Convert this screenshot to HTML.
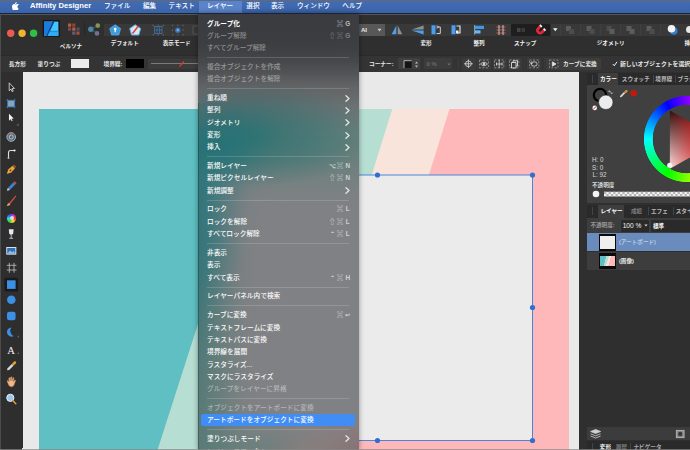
<!DOCTYPE html>
<html lang="ja">
<head>
<meta charset="utf-8">
<title>Affinity Designer</title>
<style>
*{box-sizing:border-box;margin:0;padding:0}
html,body{width:690px;height:450px;overflow:hidden;background:#2e2e2e}
body{position:relative;font-family:"Liberation Sans","Noto Sans CJK JP",sans-serif;font-size:8px;color:#fff;line-height:1}
.abs{position:absolute}
.t{position:absolute;white-space:nowrap;line-height:10px;height:10px}
/* ---------- menubar ---------- */
#menubar{left:0;top:0;width:690px;height:14.300px;background:linear-gradient(#5a6b8c 0,#56698e 1.400px,#406cb5 2.200px,#3b63a8 12.800px,#19233c 13.200px,#19233c 14.300px)}
#menubar .t{top:1.400px;font-size:6.600px;font-weight:500;color:#fff}
#mb-active{left:198.500px;top:1px;width:43.500px;height:12px;background:#5b83ca}
/* ---------- toolbar ---------- */
#toolbar{left:0;top:13px;width:690px;height:43px;background:linear-gradient(#565656 1.300px,#565656 2px,#2f2f2f 2.300px)}
#toolbar .lbl{font-size:5.600px;font-weight:700;color:#f0f0f0;top:25px}
#toolbar .band{position:absolute;top:11px;height:12px;background:#393939}
#toolbar svg,#ctx svg,#tools svg,#right svg{position:absolute;overflow:visible}
#ctx{left:0;top:55px;width:690px;height:17px;background:linear-gradient(#2a2a2a 0,#2a2a2a .6px,#343434 1px)}
#ctx .t{font-size:5.700px;font-weight:700;color:#e6e6e6;top:3.500px}
#ctx .box{position:absolute;top:3px;height:11px;background:#404040;border-radius:1px}
/* ---------- canvas ---------- */
#tools{left:0;top:72px;width:22.700px;height:376px;background:#2e2e2e}
#canvas{left:22px;top:71.600px;width:557px;height:378.400px;background:#e9e9e9;overflow:hidden}
/* ---------- right panel ---------- */
#right{left:579px;top:72px;width:111px;height:378px;background:#2f2f2f}
#right .pt{font-size:5.600px;font-weight:700;color:#b8b8b8}
#right .pt.on{color:#fff}
#right .pt.dim{color:#7c7c7c}
/* ---------- dropdown ---------- */
#menu{left:198px;top:13px;width:161px;height:437px;overflow:hidden;background:#666;box-shadow:0 0 5px rgba(0,0,0,.4)}
#menu .bd{position:absolute;left:-98px;top:-63px;width:360px;height:600px;filter:blur(17px) saturate(2)}
#menu .ov{position:absolute;left:0;top:0;width:161px;height:437px;background:radial-gradient(ellipse 105px 52px at 64px 122px,rgba(16,105,106,.5),rgba(16,105,106,.3) 50%,rgba(16,105,106,0) 100%),linear-gradient(to bottom,rgba(40,40,40,0) 28px,rgba(40,40,40,.2) 60px,rgba(40,40,40,.2) 85px,rgba(40,40,40,0) 120px),rgba(67,69,73,.64)}
#menu .ov2{position:absolute;left:0;top:90px;width:50px;height:347px;background:linear-gradient(to right,rgba(25,95,95,.14),rgba(25,95,95,0));box-shadow:inset 1px 0 0 rgba(0,0,0,.22)}
#menu .t{left:9px;font-size:6.700px;font-weight:500;color:#fbfbfb}
#menu .d{color:rgba(255,255,255,.42)}
#menu .k{left:auto;right:7.300px;color:rgba(255,255,255,.66);font-weight:700;font-size:6.400px}
#menu .k span{display:inline-block;width:7.800px;text-align:center}
#menu .k.d{color:rgba(255,255,255,.36)}
#menu .sep{position:absolute;left:9px;width:142px;height:1px;background:rgba(255,255,255,.16)}
#menu .hl{position:absolute;left:3px;width:154px;height:12px;background:#3f8df5;border-radius:2px}
#menu .ar{position:absolute;left:147px;width:5px;height:7px}
</style>
</head>
<body>

<!-- ======= canvas ======= -->
<div id="canvas" class="abs">
<svg class="abs" style="left:0;top:.4px" width="557" height="378" viewBox="22 72 557 378">
  <rect x="39" y="109" width="530" height="341" fill="#5fbfc2"/>
  <polygon points="267,109 569,109 569,450 157.500,450" fill="#b7ded3"/>
  <polygon points="392.300,109 569,109 569,450 286,450" fill="#f9e4dc"/>
  <polygon points="449.500,109 569,109 569,450 343,450" fill="#feb8b9"/>
  <rect x="222" y="175" width="310.500" height="265.500" fill="#ebebeb"/>
  <rect x="222.500" y="175" width="310" height="265.500" fill="none" stroke="#4a86d8" stroke-width="1"/>
  <g fill="#2f6fd0">
    <circle cx="377.500" cy="175" r="2.600"/><circle cx="532.500" cy="175" r="2.600"/>
    <circle cx="532.500" cy="307.500" r="2.600"/><circle cx="222.500" cy="307.500" r="2.600"/>
    <circle cx="377.500" cy="440.500" r="2.600"/><circle cx="532.500" cy="440.500" r="2.600"/>
    <circle cx="222.500" cy="175" r="2.600"/><circle cx="222.500" cy="440.500" r="2.600"/>
  </g>
</svg>
</div>

<!-- ======= left tools ======= -->
<div id="tools" class="abs">
  <div class="abs" style="left:0;top:0;width:1px;height:378px;background:#4c4c4c"></div>
  <svg style="left:0;top:0" width="22" height="378" viewBox="0 72 22 378">
    <!-- move tool -->
    <g transform="translate(11.800 87.200) scale(.84) translate(-11.600 -87.700)"><path d="M8.500 82.500 V92 L10.600 89.900 L12 93 L13.300 92.400 L11.900 89.400 L14.800 89.200 Z" fill="#2a2a2a" stroke="#dcdcdc" stroke-width="1" stroke-linejoin="round"/></g>
    <!-- artboard tool -->
    <rect x="7.600" y="100.300" width="7" height="6.600" fill="#8aa4b6"/>
    <path d="M6.300 100.300 H15.500 M6.300 106.900 H15.500 M7.600 98.800 V108.300 M14.600 98.800 V108.300" stroke="#2f7fc8" stroke-width=".8"/>
    <!-- node tool -->
    <g transform="translate(11.200 117.500) scale(.8) translate(-11.600 -120.800)"><path d="M8.800 116 V125 L10.900 123 L12.300 125.600 L13.400 125 L12.100 122.400 L14.800 122 Z" fill="#f2f2f2"/></g>
    <path d="M16.500 125.500 l2 0 l0 -2 Z" fill="#7a7a7a"/>
    <!-- contour/spiral tool -->
    <circle cx="11.200" cy="137" r="4.300" fill="#5a6a7a" stroke="#a8b4c0" stroke-width="1"/>
    <circle cx="11.200" cy="137" r="2" fill="none" stroke="#c8d0d8" stroke-width=".8"/>
    <path d="M8 134.500 A4.300 4.300 0 0 1 14.800 134.800" fill="none" stroke="#b86a6a" stroke-width=".9"/>
    <!-- corner tool -->
    <path d="M8.500 158 V152.500 Q8.500 150.500 10.500 150.500 H14.500" fill="none" stroke="#e0e0e0" stroke-width="1.100"/>
    <circle cx="14.500" cy="150.500" r="1.100" fill="#f0f0f0"/><circle cx="8.500" cy="158" r="1" fill="#bdbdbd"/>
    <!-- pen -->
    <path d="M6.800 174 L8.200 169.500 L12.500 165.800 L15 168.300 L11.300 172.600 Z" fill="#e8a23a"/>
    <path d="M12.500 165.800 L14 164.500 L16.300 166.800 L15 168.300 Z" fill="#8a5a2a"/>
    <circle cx="10.500" cy="170.300" r=".9" fill="#5a3a1a"/>
    <!-- pencil -->
    <path d="M7 190.800 L7.800 188 L13.500 182.300 L15.500 184.300 L9.800 190 Z" fill="#3f7fd0"/>
    <path d="M13.500 182.300 L14.600 181.200 L16.600 183.200 L15.500 184.300 Z" fill="#d84a3a"/>
    <path d="M7 190.800 L7.800 188 L9.800 190 Z" fill="#e8c8a0"/>
    <!-- brush -->
    <g transform="translate(0 -2.5)">
    <path d="M9 205.500 L15.500 198 L16.400 198.800 L10.300 206.600 Z" fill="#c8503a"/>
    <path d="M6.800 208.500 Q7.500 205.500 9 205.500 L10.300 206.600 Q10 208.500 6.800 208.500 Z" fill="#e8a060"/>
    </g>
    </svg>
  <!-- fill tool (colour wheel) -->
  <div class="abs" style="left:7px;top:141.800px;width:9px;height:9px;border-radius:50%;background:conic-gradient(from 90deg,#f33,#fd3,#3d3,#3dd,#35f,#d3d,#f33)"></div>
  <div class="abs" style="left:9.500px;top:144.300px;width:4px;height:4px;border-radius:50%;background:#ddd"></div>
  <svg style="left:0;top:0" width="22" height="378" viewBox="0 72 22 378">
    <!-- transparency tool (glass) -->
    <g transform="translate(0 -2.3)">
    <path d="M8.800 231.500 H13.600 L13.200 236 Q11.200 238 9.200 236 Z" fill="#e8e8f0"/>
    <path d="M11.200 237 V240.300 M9.300 240.600 H13.100" stroke="#c8c8d0" stroke-width=".9"/>
    </g>
    <!-- place image -->
    <g transform="translate(0 -1.3)">
    <rect x="6.300" y="248.300" width="10" height="7.600" fill="#e8eef4"/>
    <rect x="7.200" y="249.200" width="8.200" height="5.800" fill="#2f6fb8"/>
    <path d="M7.200 255 L10 251.800 L12 253.500 L13.500 252.300 L15.400 255 Z" fill="#8fc0e8"/>
    </g>
    <!-- crop -->
    <g transform="translate(0 -1.5)">
    <path d="M9.300 264.300 V274.200 M14 264.300 V274.200 M6.800 266.800 H16.500 M6.800 271.500 H16.500" fill="none" stroke="#b4b4b4" stroke-width=".9"/>
    </g>
    <!-- rect (selected) -->
    <rect x="4.500" y="277.800" width="13.600" height="13.600" rx="1.500" fill="#1a1a1a"/>
    <rect x="7" y="280.300" width="8.600" height="8.600" fill="#3b8fe4"/>
    <!-- ellipse -->
    <g transform="translate(0 -0.7)">
    <circle cx="11.300" cy="300.500" r="4.300" fill="#3b8fe4"/>
    </g>
    <!-- rounded rect -->
    <g transform="translate(0 -1)">
    <rect x="7" y="312.800" width="8.600" height="8.400" rx="2.200" fill="#3b8fe4"/>
    </g>
    <!-- crescent -->
    <g transform="translate(0 -0.6)">
    <path d="M11.500 328 A4.600 4.600 0 1 0 13.800 336.600 A5.500 5.500 0 0 1 11.500 328 Z" fill="#3b8fe4"/>
    <path d="M17 337.800 l2 0 l0 -2 Z" fill="#6a6a6a"/>
    <path d="M17 354.500 l2 0 l0 -2 Z" fill="#6a6a6a"/>
    </g>
    <!-- pipette -->
    <g transform="translate(0 -1.2)">
    <path d="M7 371.500 L7.600 369.500 L11.800 365.300 L13.400 366.900 L9.200 371.100 Z" fill="#d8d8d8"/>
    <path d="M11.800 365.300 L14 362.800 Q15.500 362 16 363 Q16.600 364 15.600 365 L13.400 366.900 Z" fill="#e0a030"/>
    </g>
    <!-- hand -->
    <g transform="translate(0 2.5)">
    <path d="M8 381 L7 378.500 Q7.400 377.500 8.400 378.300 L9 379.500 L8.800 375.500 Q9.400 374.700 10 375.500 L10.300 378.500 L10.600 374.600 Q11.300 373.800 11.900 374.600 L11.900 378.500 L12.800 375.300 Q13.500 374.700 14 375.500 L13.500 379.300 L14.800 377.500 Q15.700 377.300 15.600 378.300 L14 382.500 Q13.500 384.300 11.500 384.300 Q9 384.300 8 381 Z" fill="#f0b88a" stroke="#b87848" stroke-width=".5"/>
    </g>
    <!-- zoom -->
    <g transform="translate(0 1.5)">
    <circle cx="10.300" cy="396.300" r="3.600" fill="#9cc8ee" stroke="#e8f0f8" stroke-width="1"/>
    <path d="M13 399.200 L15.800 402.200" stroke="#d89a3a" stroke-width="1.600" stroke-linecap="round"/>
    </g>
    </svg>
  <div class="t" style="left:7.200px;top:272.500px;font-family:'Liberation Serif',serif;font-size:10.500px;font-weight:400;line-height:11px;height:11px;color:#f2f2f2">A</div>
</div>


<!-- ======= right panel ======= -->
<div id="right" class="abs">
  <!-- coordinates inside: subtract (579,72) -->
  <!-- colour panel tabs -->
  <div class="abs" style="left:8px;top:1px;width:103px;height:11.500px;background:#2a2a2a"></div>
  <div class="abs" style="left:19.300px;top:1px;width:20px;height:12px;background:#3e3e3e"></div>
  <div class="abs" style="left:13px;top:3px;width:1px;height:8px;background:#444"></div>
  <div class="t pt on" style="left:21px;top:2.200px">カラー</div>
  <div class="t pt" style="left:42.800px;top:2.200px">スウォッチ</div>
  <div class="t pt" style="left:76.300px;top:2.200px">境界線</div>
  <div class="t pt" style="left:98.600px;top:2.200px">ブラシ</div>
  <div class="abs" style="left:73.600px;top:3px;width:1px;height:8px;background:#444"></div>
  <div class="abs" style="left:95.900px;top:3px;width:1px;height:8px;background:#444"></div>
  <!-- colour panel body -->
  <div class="abs" style="left:7.500px;top:12.500px;width:103.500px;height:118.500px;background:#404040"></div>
  <!-- hue ring -->
  <div class="abs" style="left:63.900px;top:23.200px;width:88px;height:88px;border-radius:50%;background:conic-gradient(from 90deg,#f00,#ff0,#0f0,#0ff,#00f,#f0f,#f00);-webkit-mask:radial-gradient(circle closest-side,transparent 33.900px,#000 34.600px,#000 42.700px,transparent 43.400px);mask:radial-gradient(circle closest-side,transparent 33.900px,#000 34.600px,#000 42.700px,transparent 43.400px)"></div>
  <svg style="left:0;top:0" width="111" height="378" viewBox="579 72 111 378">
    <defs>
      <linearGradient id="tg1" x1="661" y1="139.500" x2="712" y2="139.500" gradientUnits="userSpaceOnUse"><stop offset="0" stop-color="#e01010" stop-opacity="0"/><stop offset="1" stop-color="#e01010" stop-opacity="1"/></linearGradient>
      <linearGradient id="tg2" x1="670" y1="108" x2="670" y2="166" gradientUnits="userSpaceOnUse"><stop offset="0" stop-color="#000"/><stop offset="1" stop-color="#fff"/></linearGradient>
    </defs>
    <polygon points="669.900,110.600 720.400,139.700 669.900,168.800" fill="url(#tg2)"/>
    <polygon points="669.900,110.600 720.400,139.700 669.900,168.800" fill="url(#tg1)"/>
    <circle cx="669.600" cy="165.400" r="2.300" fill="#f4f4f4" stroke="#fff" stroke-width=".5"/>
    <!-- stroke / fill selectors -->
    <circle cx="600" cy="95.100" r="6.200" fill="none" stroke="#000" stroke-width="2.200"/>
    <circle cx="605.800" cy="102.300" r="7.200" fill="#ececec" stroke="#2a2a2a" stroke-width=".6"/>
    <path d="M608.500 91.300 q2.800 -.6 3.300 2.600 M611.800 93.900 l-1.300 -1 M611.800 93.900 l1 -1.300 M608.500 91.300 l1.200 -1.200 M608.500 91.300 l1.300 1" fill="none" stroke="#b8b8b8" stroke-width=".7"/>
    <circle cx="594.700" cy="107.900" r="2.300" fill="#f4f4f4"/>
    <path d="M593.200 109.400 L596.200 106.400" stroke="#d83030" stroke-width="1"/>
    <!-- pipette -->
    <path d="M619.800 97.300 L620.300 95.800 L624 92.100 L625.200 93.300 L621.500 97 Z" fill="#d8d8d8"/>
    <path d="M624 92.100 L625.500 90.300 Q626.800 89.700 627.400 90.600 Q627.900 91.500 627 92.300 L625.200 93.300 Z" fill="#d89a30"/>
    <circle cx="633.700" cy="93.300" r="3.200" fill="#c4180f"/>
    <!-- opacity slider -->
    <rect x="604" y="191.800" width="86" height="4.600" fill="#f2f2f2"/>
    <g fill="#b4b4b4">
      <path d="M604 191.800h2.300v2.300h-2.300z M608.600 191.800h2.300v2.300h-2.300z M613.200 191.800h2.300v2.300h-2.300z M617.800 191.800h2.300v2.300h-2.300z M622.400 191.800h2.300v2.300h-2.300z M627 191.800h2.300v2.300h-2.300z M631.600 191.800h2.300v2.300h-2.300z M636.200 191.800h2.300v2.300h-2.300z M640.800 191.800h2.300v2.300h-2.300z M645.400 191.800h2.300v2.300h-2.300z M650 191.800h2.300v2.300h-2.300z M654.600 191.800h2.300v2.300h-2.300z M659.200 191.800h2.300v2.300h-2.300z M663.800 191.800h2.300v2.300h-2.300z M668.400 191.800h2.300v2.300h-2.300z M673 191.800h2.300v2.300h-2.300z M677.600 191.800h2.300v2.300h-2.300z M682.200 191.800h2.300v2.300h-2.300z M686.800 191.800h2.300v2.300h-2.300z"/>
      <path d="M606.300 194.100h2.300v2.300h-2.300z M610.900 194.100h2.300v2.300h-2.300z M615.500 194.100h2.300v2.300h-2.300z M620.100 194.100h2.300v2.300h-2.300z M624.700 194.100h2.300v2.300h-2.300z M629.300 194.100h2.300v2.300h-2.300z M633.900 194.100h2.300v2.300h-2.300z M638.500 194.100h2.300v2.300h-2.300z M643.100 194.100h2.300v2.300h-2.300z M647.700 194.100h2.300v2.300h-2.300z M652.300 194.100h2.300v2.300h-2.300z M656.900 194.100h2.300v2.300h-2.300z M661.500 194.100h2.300v2.300h-2.300z M666.100 194.100h2.300v2.300h-2.300z M670.700 194.100h2.300v2.300h-2.300z M675.300 194.100h2.300v2.300h-2.300z M679.900 194.100h2.300v2.300h-2.300z M684.500 194.100h2.300v2.300h-2.300z M689.100 194.100h.9v2.300h-.9z"/>
    </g>
    <circle cx="596" cy="194" r="3.300" fill="#f4f4f4"/>
  </svg>
  <div class="t" style="left:13px;top:83px;font-size:6.300px;color:#d6d6d6">H: 0</div>
  <div class="t" style="left:13px;top:90.500px;font-size:6.300px;color:#d6d6d6">S: 0</div>
  <div class="t" style="left:13.500px;top:97.700px;font-size:6.300px;color:#d6d6d6">L: 92</div>
  <div class="t" style="left:13px;top:107.700px;font-size:5.600px;font-weight:700;color:#d8d8d8">不透明度</div>

  <!-- layers panel tabs -->
  <div class="abs" style="left:8px;top:133px;width:103px;height:12.500px;background:#2a2a2a"></div>
  <div class="abs" style="left:19.300px;top:133px;width:25.600px;height:13px;background:#3e3e3e"></div>
  <div class="abs" style="left:13px;top:135px;width:1px;height:8px;background:#444"></div>
  <div class="t pt on" style="left:21.400px;top:134px">レイヤー</div>
  <div class="t pt dim" style="left:52px;top:134px">成絵</div>
  <div class="t pt" style="left:72px;top:134px">エフェ</div>
  <div class="t pt" style="left:96.700px;top:134px">スタイル</div>
  <div class="abs" style="left:68.800px;top:135px;width:1px;height:8px;background:#444"></div>
  <div class="abs" style="left:93.500px;top:135px;width:1px;height:8px;background:#444"></div>
  <!-- opacity row -->
  <div class="abs" style="left:8px;top:146px;width:103px;height:15px;background:#3d3d3d"></div>
  <div class="t pt dim" style="left:11.400px;top:148px;color:#9a9a9a">不透明度:</div>
  <div class="abs" style="left:42px;top:147.500px;width:27.600px;height:12px;background:#2a2a2a;border-radius:1px"></div>
  <div class="t" style="left:43.700px;top:148.500px;font-size:6.600px;color:#f4f4f4">100 %</div>
  <svg style="left:64.500px;top:152px" width="4" height="3" viewBox="0 0 4 3"><path d="M.3 .4 H3.700 L2 2.600 Z" fill="#d0d0d0"/></svg>
  <div class="abs" style="left:72px;top:147.500px;width:39px;height:12px;background:#2a2a2a;border-radius:1px 0 0 1px"></div>
  <div class="t pt on" style="left:74px;top:148.500px">標準</div>
  <!-- layer rows -->
  <div class="abs" style="left:8.200px;top:161.200px;width:103px;height:18.300px;background:#6a8cbd"></div>
  <div class="abs" style="left:20px;top:162px;width:17px;height:16.700px;background:#0a0a0a"></div>
  <div class="abs" style="left:20.800px;top:164px;width:15.400px;height:12.800px;background:#efefef"></div>
  <div class="t pt" style="left:40px;top:165.200px;color:#b4cbea">(アートボード)</div>
  <div class="abs" style="left:8.200px;top:179.500px;width:103px;height:18.400px;background:#3d3d3d"></div>
  <div class="abs" style="left:20px;top:181.400px;width:17px;height:16px;background:#0a0a0a"></div>
  <div class="abs" style="left:20.800px;top:183.500px;width:15.400px;height:10.400px;background:linear-gradient(107deg,#5fbfc2 0,#5fbfc2 36%,#b7ded3 36%,#b7ded3 50%,#f9e4dc 50%,#f9e4dc 62%,#feb8b9 62%)"></div>
  <div class="t pt" style="left:40px;top:183.500px;color:#e8e8e8">(画像)</div>
  <!-- bottom bar -->
  <div class="abs" style="left:7.700px;top:355.300px;width:104px;height:13px;background:#3c3c3c"></div>
  <svg style="left:0;top:0" width="111" height="378" viewBox="579 72 111 378">
    <g fill="none" stroke="#d0d0d0" stroke-width=".8" stroke-linejoin="round">
      <path d="M590.600 431.500 L595.600 429.500 L600.600 431.500 L595.600 433.500 Z" fill="#d0d0d0"/>
      <path d="M590.600 433.800 L595.600 435.800 L600.600 433.800 M590.600 436 L595.600 438 L600.600 436"/>
    </g>
    <rect x="676.300" y="430.300" width="7.800" height="7.400" fill="#8a8a8a"/>
    <rect x="676.300" y="430.300" width="7.800" height="7.400" fill="none" stroke="#bdbdbd" stroke-width=".8"/>
    <circle cx="680.200" cy="434" r="2.200" fill="#3a3a3a"/>
  </svg>
  <!-- bottom tabs -->
  <div class="abs" style="left:7.700px;top:369px;width:104px;height:9px;background:#2a2a2a"></div>
  <div class="abs" style="left:13px;top:370.500px;width:1px;height:8px;background:#444"></div>
  <div class="t pt on" style="left:20.800px;top:370px">変形</div>
  <div class="t pt dim" style="left:37px;top:370px">履歴</div>
  <div class="t pt" style="left:54.500px;top:370px;color:#a8a8a8">ナビゲータ</div>
  <div class="abs" style="left:50.500px;top:371px;width:1px;height:7px;background:#444"></div>
</div>


<!-- ======= toolbar ======= -->
<div id="toolbar" class="abs">
  <div class="abs" style="left:0;top:0;width:1px;height:60px;background:#4c4c4c"></div>
  <!-- traffic lights -->
  <svg style="left:0;top:0" width="60" height="43" viewBox="0 13 60 43">
    <circle cx="10.700" cy="33.200" r="3.700" fill="#ee5a52"/>
    <circle cx="22.100" cy="33.200" r="3.700" fill="#efb32e"/>
    <circle cx="33.600" cy="33.200" r="3.700" fill="#2fbe46"/>
  </svg>
  <!-- personas -->
  <svg style="left:42px;top:7px" width="62" height="18" viewBox="42 20 62 18">
    <rect x="42.600" y="20" width="17.400" height="16.800" rx="1" fill="#161616"/>
    <rect x="44" y="21.600" width="14.400" height="14.200" fill="#44c4ff"/>
    <polygon points="44,21.600 52.700,21.600 46.100,35.800 44,35.800" fill="#1a7cdc"/>
    <polygon points="46.100,35.800 52.700,21.600 54.500,21.600 47.900,35.800" fill="#0b3c8a"/>
    <polygon points="49.800,30.800 58.400,30.800 58.400,32.400 49,32.400" fill="#1c8ee4"/>
    <polygon points="49,32.400 58.400,32.400 58.400,35.800 47.900,35.800" fill="#2eacf6"/>
    <g>
      <rect x="68" y="23.500" width="3.200" height="3.200" fill="#c0563a"/><rect x="72.200" y="23.500" width="3.200" height="3.200" fill="#8a4a3a"/>
      <rect x="68" y="27.500" width="3.200" height="3.200" fill="#7a4a5a"/><rect x="72.200" y="27.500" width="3.200" height="3.200" fill="#b0603a"/><rect x="76.400" y="27.500" width="3.200" height="3.200" fill="#5a4a6a"/>
      <rect x="72.200" y="31.500" width="3.200" height="3.200" fill="#6a5a7a"/><rect x="76.400" y="31.500" width="3.200" height="3.200" fill="#a0523a"/>
    </g>
    <g>
      <path d="M90.800 29.300 L97.800 25.600 M90.800 29.300 L97 33.400" stroke="#3a5466" stroke-width="1.300" fill="none"/>
      <path d="M84.700 22 V36" stroke="#262626" stroke-width=".8"/>
      <circle cx="90.800" cy="29.300" r="2.700" fill="#4a88a6"/>
      <circle cx="97.800" cy="25.600" r="2.300" fill="#86965a"/>
      <circle cx="97" cy="33.400" r="2.300" fill="#74708e"/>
    </g>
  </svg>
  <div class="t lbl" style="left:59.800px;top:28px">ペルソナ</div>
  <!-- band 1 -->
  <div class="band" style="left:104px;width:96px"></div>
  <svg style="left:108px;top:11px" width="92" height="12" viewBox="108 24 92 12">
    <!-- default icon -->
    <path d="M115.200 24.800 L120.700 28.600 L118.800 35 L111.600 35 L109.700 28.600 Z" fill="#3d9be0" stroke="#6ab8f0" stroke-width=".6" stroke-linejoin="round"/>
    <circle cx="115.200" cy="29" r="1.300" fill="#fff"/><rect x="114.600" y="29" width="1.200" height="3.200" fill="#fff"/>
    <!-- reset icon -->
    <path d="M135.200 24.800 L140.700 28.600 L138.800 35 L131.600 35 L129.700 28.600 Z" fill="#d8e6f2" stroke="#5aa8e8" stroke-width="1" stroke-linejoin="round"/>
    <path d="M132.500 33.500 L138 26.500" stroke="#e0453a" stroke-width="1.600"/>
    <!-- grid icon -->
    <g stroke="#3f74a8" stroke-width=".8" fill="none">
      <rect x="154.500" y="26.500" width="7.500" height="7"/>
      <path d="M157 26.500 V33.500 M159.500 26.500 V33.500 M154.500 30 H162"/>
    </g>
    <g fill="#5a6a7a"><rect x="152.500" y="24.800" width="1.200" height="1.200"/><rect x="162.800" y="24.800" width="1.200" height="1.200"/><rect x="152.500" y="34.200" width="1.200" height="1.200"/><rect x="162.800" y="34.200" width="1.200" height="1.200"/><rect x="157.700" y="24.800" width="1.200" height="1.200"/><rect x="157.700" y="34.200" width="1.200" height="1.200"/></g>
    <!-- snap-ish icon -->
    <g fill="#5a6a7a"><rect x="172" y="24.800" width="1.200" height="1.200"/><rect x="182.500" y="24.800" width="1.200" height="1.200"/><rect x="172" y="34.200" width="1.200" height="1.200"/><rect x="182.500" y="34.200" width="1.200" height="1.200"/><rect x="177.200" y="24.800" width="1.200" height="1.200"/><rect x="177.200" y="34.200" width="1.200" height="1.200"/><rect x="172" y="29.500" width="1.200" height="1.200"/><rect x="182.500" y="29.500" width="1.200" height="1.200"/></g>
    <circle cx="177.800" cy="30.200" r="2.600" fill="#3f78b8"/><circle cx="177.800" cy="30.200" r="1.100" fill="#7ab4ec"/>
    <g stroke="#5a5a5a" stroke-width=".8" fill="none"><rect x="193" y="26" width="6" height="8"/></g>
  </svg>
  <div class="t lbl" style="left:110.800px">デフォルト</div>
  <div class="t lbl" style="left:162.700px">表示モード</div>

  <!-- right part -->
  <div class="band" style="left:359px;width:331px"></div>
  <div class="abs" style="left:359px;top:11px;width:26px;height:12px;background:#585858;border-radius:0 1px 1px 0"></div>
  <div class="t" style="left:361px;top:12px;font-size:6px;font-weight:700;color:#f0f0f0">AI</div>
  <svg style="left:377px;top:15px" width="5" height="4" viewBox="0 0 5 4"><path d="M.5 .8 H4.500 L2.500 3.400 Z" fill="#cfcfcf"/></svg>
  <svg style="left:388px;top:11px" width="302" height="12" viewBox="388 24 302 12">
    <!-- flip h -->
    <polygon points="396.300,25.500 396.300,34.300 391.700,34.300" fill="#4aa0ee"/>
    <polygon points="397.700,25.500 397.700,34.300 402.300,34.300" fill="#8f8f8f"/>
    <!-- flip v -->
    <polygon points="423.600,29.400 423.600,25.600 411.600,29.400" fill="#8f8f8f"/>
    <polygon points="423.600,30.600 423.600,34.400 411.600,30.600" fill="#4aa0ee"/>
    <!-- rotate ccw -->
    <rect x="431.500" y="25.300" width="4" height="9" fill="#4aa0ee"/>
    <path d="M436.500 27 H440.300 V33.500 H436.500" fill="none" stroke="#d0d0d0" stroke-width="1"/>
    <path d="M437 28.500 l1.500 -1.500 l-1.500 -1.500" fill="none" stroke="#e8e8e8" stroke-width=".8"/>
    <!-- rotate cw -->
    <rect x="451.500" y="25.300" width="4" height="9" fill="#4aa0ee"/>
    <path d="M456.500 26 H460 V33 H457" fill="none" stroke="#e0e0e0" stroke-width="1.200"/>
    <rect x="456" y="30.500" width="2.500" height="3" fill="#f0f0f0"/>
    <!-- align -->
    <rect x="475" y="25.800" width="9" height="3.200" fill="#3f97ea"/>
    <rect x="475" y="30.300" width="5.500" height="3.200" fill="#6db6f5"/>
    <rect x="474.300" y="25" width=".8" height="9.500" fill="#9ec8ee"/>
    <!-- distribute -->
    <g stroke="#d85a4a" stroke-width=".9"><path d="M496.500 27 H505.500 M496.500 30 H505.500 M496.500 33 H505.500"/></g>
    <g stroke="#cfcfcf" stroke-width=".9"><path d="M499 25 V35 M503 25 V35"/></g>
    <!-- snapping -->
    <rect x="511" y="24" width="39.500" height="12" rx="1" fill="#1e1e1e"/>
    <rect x="517" y="28" width="3.500" height="4" fill="#444"/><rect x="521.500" y="28" width="3.500" height="4" fill="#3a3a3a"/>
    <g transform="rotate(45 540.500 30)">
      <path d="M536.500 27 V30.500 a4 4 0 0 0 8 0 V27 h-2.700 V30.500 a1.300 1.300 0 0 1 -2.600 0 V27 Z" fill="#e0283c"/>
      <rect x="536.500" y="26" width="2.700" height="1.800" fill="#f2f2f2"/><rect x="541.800" y="26" width="2.700" height="1.800" fill="#f2f2f2"/>
    </g>
    <path d="M553 28.300 H557.600 L555.300 31.300 Z" fill="#f2f2f2"/>
    <!-- geometry (disabled) -->
    <g fill="#5c5c5c">
      <rect x="566" y="26" width="5" height="5"/><rect x="569" y="29" width="5" height="5" fill="#4c4c4c"/>
      <rect x="586.500" y="26" width="5" height="5"/><rect x="589.500" y="29" width="5" height="5" fill="#4c4c4c"/>
      <rect x="606.500" y="26" width="5" height="5" fill="#4c4c4c"/><rect x="609.500" y="29" width="5" height="5"/>
      <rect x="626.500" y="26" width="5" height="5"/><rect x="629.500" y="29" width="5" height="5"/>
      <rect x="646.500" y="26" width="5" height="5"/><rect x="649.500" y="29" width="5" height="5" fill="#4c4c4c"/>
    </g>
    <g stroke="#444" stroke-width=".6"><path d="M560.500 24 V36 M580.500 24 V36 M600.500 24 V36 M620.500 24 V36 M640.500 24 V36 M660.500 24 V36"/></g>
    <!-- insert -->
    <circle cx="673.800" cy="31" r="3.800" fill="#2f7fd0"/>
    <circle cx="671.500" cy="28.800" r="3.800" fill="#f4f4f4"/>
    <circle cx="689.500" cy="29.500" r="3.500" fill="#e8e8e8"/>
  </svg>
  <div class="t lbl" style="left:420.400px">変形</div>
  <div class="t lbl" style="left:473.500px">整列</div>
  <div class="t lbl" style="left:514px">スナップ</div>
  <div class="t lbl" style="left:596.700px">ジオメトリ</div>
  <div class="t lbl" style="left:684.500px">挿入</div>
</div>

<div id="ctx" class="abs">
  <div class="abs" style="left:0;top:0;width:1px;height:18px;background:#4c4c4c"></div>
  <div class="t" style="left:8.800px">長方形</div>
  <div class="t" style="left:37.500px">塗りつぶ</div>
  <div class="abs" style="left:71px;top:3.700px;width:18px;height:9.200px;background:#ebebeb"></div>
  <div class="t" style="left:103.500px">境界線:</div>
  <div class="abs" style="left:125.500px;top:3.700px;width:18.700px;height:9.400px;background:#000"></div>
  <div class="box" style="left:148px;width:52px;top:3.500px;height:10px;background:#3c3c3c"></div>
  <div class="abs" style="left:150.700px;top:8px;width:50px;height:1px;background:#7a7a7a"></div>
  <svg style="left:178px;top:5px" width="8" height="8" viewBox="0 0 8 8"><path d="M1.500 6.500 L6 1.500" stroke="#d83a30" stroke-width="1.200"/></svg>

  <div class="t" style="left:369px">コーナー:</div>
  <div class="box" style="left:398px;width:22.400px"></div>
  <svg style="left:403px;top:4.500px" width="16" height="9" viewBox="403 59.500 16 9">
    <rect x="403.800" y="60" width="7.800" height="7.600" fill="#151515"/>
    <path d="M404 67.600 V60.200 H411.600" fill="none" stroke="#d8d8d8" stroke-width=".8"/>
    <path d="M415 63 l1.500 -2 l1.500 2 Z M415 65 l1.500 2 l1.500 -2 Z" fill="#bdbdbd"/>
  </svg>
  <div class="box" style="left:424px;width:28.400px;background:#3c3c3c"></div>
  <div class="t" style="left:426.500px;color:#6a6a6a;font-size:6px;top:3.500px">0 %</div>
  <svg style="left:446.500px;top:7.500px" width="4" height="3" viewBox="0 0 4 3"><path d="M.3 .5 H3.700 L2 2.600 Z" fill="#707070"/></svg>
  <div class="abs" style="left:458px;top:3px;width:1px;height:11px;background:#3c3c3c"></div>
  <div class="box" style="left:461.5px;width:14px;top:2.500px;height:12px;background:#3b3b3b"></div>
  <div class="box" style="left:477px;width:14px;top:2.500px;height:12px;background:#3b3b3b"></div>
  <div class="box" style="left:492.5px;width:14px;top:2.500px;height:12px;background:#3b3b3b"></div>
  <div class="box" style="left:508px;width:14px;top:2.500px;height:12px;background:#3b3b3b"></div>
  <div class="box" style="left:527px;width:14px;top:2.500px;height:12px;background:#3b3b3b"></div>
  <div class="box" style="left:546px;width:55px;top:2.500px;height:12px;background:#3d3d3d"></div>
  <svg style="left:460px;top:3px" width="102" height="12" viewBox="460 58 102 12">
    <g fill="none" stroke="#dcdcdc" stroke-width=".8">
      <!-- crosshair -->
      <circle cx="468.400" cy="63.800" r="2.900"/><path d="M468.400 59.500 V68 M464 63.800 H472.800"/>
      <!-- eye -->
      <rect x="479.500" y="60" width="9" height="7.800" stroke-dasharray="2 1.500" stroke="#9a9a9a"/>
      <path d="M480.500 64 q3.500 -3.600 7 0 q-3.500 3.600 -7 0 Z"/><circle cx="484" cy="64" r="1" fill="#dcdcdc"/>
      <!-- align in box -->
      <rect x="494.500" y="60" width="9.300" height="7.800" stroke-dasharray="2 1.500" stroke="#9a9a9a"/>
      <path d="M499.200 59.500 V68 M496 64 H502.500 M496.500 62.500 v3 M502 62.500 v3"/>
      <!-- copy in box -->
      <rect x="509.500" y="60" width="9.300" height="7.800" stroke-dasharray="2 1.500" stroke="#9a9a9a"/>
      <path d="M511.500 62.500 H516 V68 H511.500 Z M513 62.500 V60.800 H517.500 V66 H516" stroke="#f0f0f0"/>
      <!-- rotate in box -->
      <rect x="529.500" y="60" width="9.300" height="7.800" stroke-dasharray="2 1.500" stroke="#9a9a9a"/>
      <ellipse cx="534.200" cy="64" rx="3" ry="2.200"/><path d="M531.500 61.500 l-1 1.800 l2 .2"/>
      <!-- play in box -->
      <rect x="549.500" y="60" width="8.500" height="7.800" stroke-dasharray="2 1.500" stroke="#9a9a9a"/>
      <path d="M552.300 61.800 L556 64 L552.300 66.200 Z" fill="#e8e8e8"/>
    </g>
    <g stroke="#3c3c3c" stroke-width=".8"><path d="M524.500 58 V69 M544.500 58 V69"/></g>
  </svg>
  <div class="t" style="left:563px">カーブに変換</div>
  <svg style="left:611.500px;top:5.500px" width="6" height="6" viewBox="0 0 6 6"><path d="M.8 3 L2.300 4.800 L5 .8" fill="none" stroke="#f0f0f0" stroke-width="1"/></svg>
  <div class="t" style="left:620px;font-size:5.850px">新しいオブジェクトを選択</div>
</div>


<!-- ======= menubar ======= -->
<div id="menubar" class="abs">
  <div id="mb-active" class="abs"></div>
  <svg class="abs" style="left:11.500px;top:1.600px" width="7.200" height="8.600" viewBox="0 0 170 205"><path fill="#fff" d="M150.400 69.900c-1.200 .9-21.900 12.600-21.900 38.600 0 30.100 26.400 40.700 27.200 41-.1 .6-4.200 14.600-13.900 28.800-8.700 12.500-17.700 24.900-31.500 24.900s-17.300-8-33.200-8c-15.500 0-21 8.300-33.600 8.300s-21.400-11.500-31.500-25.700C10.300 161.100 0 134.100 0 108.400 0 67.200 26.800 45.400 53.100 45.400c14 0 25.700 9.200 34.500 9.200 8.400 0 21.400-9.700 37.300-9.700 6 0 27.700 .5 41.900 20.900zM100.900 31.500c6.600-7.800 11.200-18.600 11.200-29.400 0-1.500-.1-3-.4-4.200-10.700 .4-23.400 7.100-31.100 16-6 6.800-11.600 17.700-11.600 28.600 0 1.600 .3 3.300 .4 3.800 .7 .1 1.800 .3 2.900 .3 9.600 0 21.700-6.400 28.600-15.100z" transform="translate(0 4)"/></svg>
  <div class="t" style="left:30px;font-size:7.650px;font-weight:700;top:1.200px">Affinity Designer</div>
  <div class="t" style="left:104px">ファイル</div>
  <div class="t" style="left:143px">編集</div>
  <div class="t" style="left:168.600px">テキスト</div>
  <div class="t" style="left:207px">レイヤー</div>
  <div class="t" style="left:246.300px">選択</div>
  <div class="t" style="left:271px">表示</div>
  <div class="t" style="left:297px">ウィンドウ</div>
  <div class="t" style="left:342.300px">ヘルプ</div>
</div>

<!-- ======= dropdown ======= -->
<div id="menu" class="abs">
  <svg class="bd" viewBox="100 -50 360 600">
    <rect x="100" y="-50" width="360" height="123" fill="#2e2e2e"/>
    <rect x="100" y="24" width="98" height="12" fill="#393939"/><rect x="359" y="24" width="101" height="12" fill="#393939"/>
    <rect x="100" y="73" width="360" height="480" fill="#e9e9e9"/>
    <rect x="100" y="115" width="360" height="450" fill="#5fbfc2"/>
    <polygon points="265,115 390.500,115 255,550 124,550" fill="#b7ded3"/>
    <polygon points="390.500,115 448,115 312,550 255,550" fill="#f9e4dc"/>
    <polygon points="448,115 460,115 460,550 312,550" fill="#feb8b9"/>
    <rect x="222" y="175" width="311" height="265.500" fill="#ebebeb"/>
  </svg>
  <div class="ov"></div><div class="ov2"></div>
  <div class="t" style="top:6px;font-weight:700;color:#fff">グループ化</div>
  <div class="t k" style="top:6px"><span>⌘</span><span>G</span></div>
  <div class="t d" style="top:17.5px">グループ解除</div>
  <div class="t k d" style="top:17.5px"><span>⇧</span><span>⌘</span><span>G</span></div>
  <div class="t d" style="top:30px">すべてグループ解除</div>
  <div class="sep" style="top:43.5px"></div>
  <div class="t d" style="top:48.5px">複合オブジェクトを作成</div>
  <div class="t d" style="top:61px">複合オブジェクトを解除</div>
  <div class="sep" style="top:74.5px"></div>
  <div class="t" style="top:80px">重ね順</div>
  <svg class="ar" style="top:81.5px" viewBox="0 0 5 7"><path d="M1 .8 L4 3.500 L1 6.200" fill="none" stroke="#e6e6e6" stroke-width="1.300" stroke-linecap="round" stroke-linejoin="round"/></svg>
  <div class="t" style="top:92px">整列</div>
  <svg class="ar" style="top:93.5px" viewBox="0 0 5 7"><path d="M1 .8 L4 3.500 L1 6.200" fill="none" stroke="#e6e6e6" stroke-width="1.300" stroke-linecap="round" stroke-linejoin="round"/></svg>
  <div class="t" style="top:104.5px">ジオメトリ</div>
  <svg class="ar" style="top:106px" viewBox="0 0 5 7"><path d="M1 .8 L4 3.500 L1 6.200" fill="none" stroke="#e6e6e6" stroke-width="1.300" stroke-linecap="round" stroke-linejoin="round"/></svg>
  <div class="t" style="top:117px">変形</div>
  <svg class="ar" style="top:118.5px" viewBox="0 0 5 7"><path d="M1 .8 L4 3.500 L1 6.200" fill="none" stroke="#e6e6e6" stroke-width="1.300" stroke-linecap="round" stroke-linejoin="round"/></svg>
  <div class="t" style="top:129px">挿入</div>
  <svg class="ar" style="top:130.5px" viewBox="0 0 5 7"><path d="M1 .8 L4 3.500 L1 6.200" fill="none" stroke="#e6e6e6" stroke-width="1.300" stroke-linecap="round" stroke-linejoin="round"/></svg>
  <div class="sep" style="top:142.5px"></div>
  <div class="t" style="top:147.5px">新規レイヤー</div>
  <div class="t k" style="top:147.5px"><span>⌥</span><span>⌘</span><span>N</span></div>
  <div class="t" style="top:160px">新規ピクセルレイヤー</div>
  <div class="t k" style="top:160px"><span>⇧</span><span>⌘</span><span>N</span></div>
  <div class="t" style="top:172.5px">新規調整</div>
  <svg class="ar" style="top:174px" viewBox="0 0 5 7"><path d="M1 .8 L4 3.500 L1 6.200" fill="none" stroke="#e6e6e6" stroke-width="1.300" stroke-linecap="round" stroke-linejoin="round"/></svg>
  <div class="sep" style="top:186.5px"></div>
  <div class="t" style="top:191px">ロック</div>
  <div class="t k" style="top:191px"><span>⌘</span><span>L</span></div>
  <div class="t" style="top:203.5px">ロックを解除</div>
  <div class="t k" style="top:203.5px"><span>⇧</span><span>⌘</span><span>L</span></div>
  <div class="t" style="top:216px">すべてロック解除</div>
  <div class="t k" style="top:216px"><span>⌃</span><span>⌘</span><span>L</span></div>
  <div class="sep" style="top:230px"></div>
  <div class="t" style="top:235px">非表示</div>
  <div class="t" style="top:247px">表示</div>
  <div class="t" style="top:259.5px">すべて表示</div>
  <div class="t k" style="top:259.5px"><span>⌃</span><span>⌘</span><span>H</span></div>
  <div class="sep" style="top:273.5px"></div>
  <div class="t" style="top:278px">レイヤーパネル内で検索</div>
  <div class="sep" style="top:292px"></div>
  <div class="t" style="top:297px">カーブに変換</div>
  <div class="t k" style="top:297px"><span>⌘</span><span>↩</span></div>
  <div class="t" style="top:309.5px">テキストフレームに変換</div>
  <div class="t" style="top:322px">テキストパスに変換</div>
  <div class="t" style="top:334px">境界線を展開</div>
  <div class="t" style="top:346.5px">ラスタライズ...</div>
  <div class="t" style="top:359px">マスクにラスタライズ</div>
  <div class="t d" style="top:371px">グループをレイヤーに昇格</div>
  <div class="sep" style="top:385px"></div>
  <div class="t d" style="top:390px">オブジェクトをアートボードに変換</div>
  <div class="hl" style="top:401px"></div>
  <div class="t" style="top:402px">アートボードをオブジェクトに変換</div>
  <div class="sep" style="top:416px"></div>
  <div class="t" style="top:420.5px">塗りつぶしモード</div>
  <svg class="ar" style="top:422px" viewBox="0 0 5 7"><path d="M1 .8 L4 3.500 L1 6.200" fill="none" stroke="#e6e6e6" stroke-width="1.300" stroke-linecap="round" stroke-linejoin="round"/></svg>
  <div class="t" style="top:434.200px">レイヤーエフェクト...</div>
</div>

<div class="abs" style="left:190px;top:13px;width:180px;height:1.300px;background:#19233c"></div>
<div class="abs" style="left:0;top:449px;width:690px;height:1px;background:rgba(135,135,135,.7)"></div>
</body>
</html>
